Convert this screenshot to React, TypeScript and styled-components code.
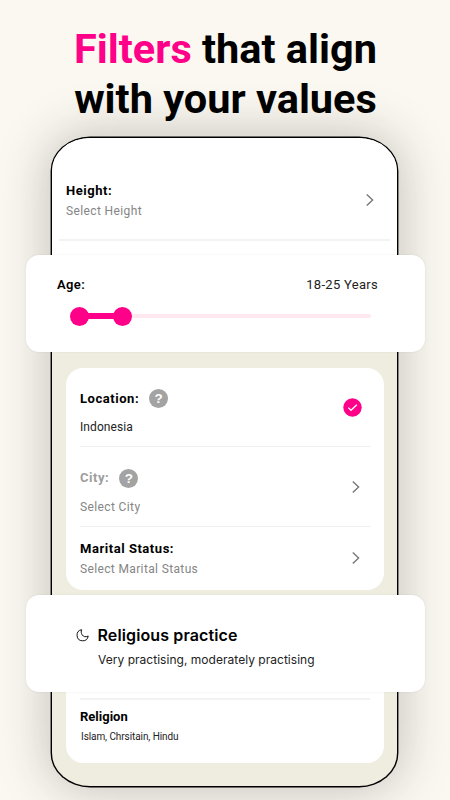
import React from "react";
import styled, { createGlobalStyle } from "styled-components";

const PINK = "#ff0089";

const GlobalStyle = createGlobalStyle`
  * { box-sizing: border-box; }
  body { margin: 0; background: #fbf8f1; }
`;

const Page = styled.main`
  width: 450px;
  height: 800px;
  overflow: hidden;
  background: #fbf8f1;
  font-family: Roboto, "Liberation Sans", sans-serif;
  color: #000;
`;

const Headline = styled.h1`
  position: relative;
  z-index: 1;
  margin: 0;
  height: 138px;
  padding: 24px 0 0 1px;
  text-align: center;
  font-size: 41.5px;
  line-height: 50px;
  font-weight: 700;
  white-space: nowrap;
`;

const Accent = styled.span`
  color: ${PINK};
`;

const Phone = styled.section`
  width: 345px;
  height: 648px;
  margin-left: 52px;
  border-radius: 38px / 33px;
  background: #efece0;
  box-shadow: 0 0 0 1.4px #000, 0 0 50px 4px rgba(40, 40, 40, 0.26);
`;

const TopPanel = styled.div`
  height: 118px;
  padding: 43px 7px 0;
  background: #fff;
  border-radius: 38px 38px 0 0 / 33px 33px 0 0;
`;

const Row = styled.div<{ $height: number; $left?: number; $right?: number }>`
  display: flex;
  align-items: center;
  justify-content: space-between;
  height: ${(p) => p.$height}px;
  padding: 0 ${(p) => p.$right ?? 0}px 0 ${(p) => p.$left ?? 0}px;
`;

const Gap = styled.div<{ $size: number }>`
  height: ${(p) => p.$size}px;
`;

const RowIcon = styled.span<{ $lift: number }>`
  display: flex;
  padding-bottom: ${(p) => p.$lift * 2}px;
`;

const TitleLine = styled.div<{ $height?: number }>`
  display: flex;
  align-items: center;
  gap: 10px;
  height: ${(p) => p.$height ?? 20}px;
`;

const Label = styled.span<{ $muted?: boolean; $spacing?: number; $weight?: number }>`
  font-size: 13px;
  line-height: 20px;
  font-weight: ${(p) => p.$weight ?? 700};
  letter-spacing: ${(p) => p.$spacing ?? 0.54}px;
  color: ${(p) => (p.$muted ? "#9d9d9d" : "#000")};
  white-space: nowrap;
`;

const Value = styled.div<{ $color?: string; $size?: number; $spacing?: number; $indent?: number }>`
  padding-left: ${(p) => p.$indent ?? 0}px;
  font-size: ${(p) => p.$size ?? 12}px;
  line-height: 20px;
  letter-spacing: ${(p) => p.$spacing ?? 0.38}px;
  color: ${(p) => p.$color ?? "#858585"};
  white-space: nowrap;
`;

const Divider = styled.hr<{ $thickness?: number }>`
  margin: 0;
  border: 0;
  height: ${(p) => p.$thickness ?? 1}px;
  background: ${(p) => (p.$thickness ? "#f3f3f3" : "#eeeeee")};
`;

const FloatingCard = styled.article`
  position: relative;
  width: 399px;
  height: 97px;
  margin-left: -26px;
  background: #fff;
  border-radius: 13px;
  box-shadow: 0 0 2px rgba(0, 0, 0, 0.1);
`;

const AgeCard = styled(FloatingCard)`
  margin-top: -1px;
  padding: 20px 47px 0 31px;
`;

const Slider = styled.div`
  display: flex;
  align-items: center;
  height: 20px;
  margin: 11px 7px 0 13px;
`;

const Thumb = styled.span`
  width: 19px;
  height: 19px;
  border-radius: 50%;
  background: ${PINK};
`;

const Range = styled.span`
  width: 26px;
  height: 6px;
  margin: 0 -1px;
  background: ${PINK};
`;

const Track = styled.span`
  flex: 1;
  height: 4px;
  border-radius: 0 2px 2px 0;
  background: #ffe8f0;
`;

const Panel = styled.div`
  height: 222px;
  margin: 16px 13px 0 14px;
  padding: 20px 14px 0;
  background: #fff;
  border-radius: 17px;
`;

const LowerPanel = styled.div`
  height: 71px;
  margin: 0 13px 0 14px;
  padding: 6px 14px 0;
  background: #fff;
  border-radius: 0 0 17px 17px;
`;

const PracticeCard = styled(FloatingCard)`
  display: grid;
  grid-template-columns: 13px 1fr;
  grid-template-rows: 24px 24px;
  column-gap: 8px;
  align-items: center;
  margin-top: 5px;
  padding: 28px 0 0 50px;
  font-family: Inter, "Liberation Sans", sans-serif;
`;

const PracticeTitle = styled.h2`
  margin: 0;
  padding: 0 0 1px 0.5px;
  font-size: 16px;
  font-weight: 600;
  letter-spacing: 0.12px;
  white-space: nowrap;
`;

const PracticeText = styled.div`
  grid-column: 2;
  padding: 1px 0 0 1px;
  font-size: 12px;
  letter-spacing: 0.03px;
  color: #222;
  white-space: nowrap;
`;

const HelpBadge = styled.span`
  display: flex;
  align-items: center;
  justify-content: center;
  width: 19px;
  height: 19px;
  border-radius: 50%;
  background: #a3a3a3;
  color: #fff;
  font-family: "Liberation Sans", sans-serif;
  font-size: 13.5px;
  font-weight: 700;
  line-height: 19px;
`;

const Chevron = () => (
  <svg width="8" height="14" viewBox="0 0 8 14" fill="none" stroke="#777" strokeWidth="1.4">
    <path d="M.8 1.5 6.6 7 .8 12.5" />
  </svg>
);

const Check = () => (
  <svg width="19" height="19" viewBox="0 0 19 19" fill="none">
    <circle cx="9.5" cy="9.5" r="9.2" fill={PINK} />
    <path d="m5.3 9.6 2.7 2.7 5.8-5.6" stroke="#fff" strokeWidth="1.3" />
  </svg>
);

const Moon = () => (
  <svg width="13" height="13" viewBox="0 0 13 13" fill="none" stroke="#111" strokeWidth="1" strokeLinejoin="round">
    <path d="M5.6 .7A5.6 5.6 0 1 0 12.2 7C9.7 8.3 7.5 7.8 6.2 5.9 5.1 4.2 5 2.4 5.6.7Z" />
  </svg>
);

export default function App() {
  return (
    <>
      <GlobalStyle />
      <Page>
        <Headline>
          <Accent>Filters</Accent> that align
          <br />
          with your values
        </Headline>
        <Phone>
          <TopPanel>
            <Row $height={40} $left={7} $right={16}>
              <div>
                <TitleLine>
                  <Label>Height:</Label>
                </TitleLine>
                <Value>Select Height</Value>
              </div>
              <RowIcon $lift={1}>
                <Chevron />
              </RowIcon>
            </Row>
            <Gap $size={18} />
            <Divider $thickness={2} />
          </TopPanel>

          <AgeCard>
            <Row $height={20}>
              <Label $weight={600} $spacing={0.4}>Age:</Label>
              <Value $color="#222" $size={13} $spacing={0.3}>18-25 Years</Value>
            </Row>
            <Slider>
              <Thumb />
              <Range />
              <Thumb />
              <Track />
            </Slider>
          </AgeCard>

          <Panel>
            <Row $height={58} $right={8}>
              <div>
                <TitleLine $height={21}>
                  <Label>Location:</Label>
                  <HelpBadge>?</HelpBadge>
                </TitleLine>
                <Gap $size={8} />
                <Value $color="#222" $spacing={0.08}>Indonesia</Value>
                <Gap $size={9} />
              </div>
              <RowIcon $lift={10}>
                <Check />
              </RowIcon>
            </Row>
            <Divider />
            <Row $height={79} $right={10}>
              <div>
                <Gap $size={11} />
                <TitleLine $height={21}>
                  <Label $muted>City:</Label>
                  <HelpBadge>?</HelpBadge>
                </TitleLine>
                <Gap $size={8} />
                <Value>Select City</Value>
              </div>
              <Chevron />
            </Row>
            <Divider />
            <Row $height={64} $right={10}>
              <div>
                <TitleLine>
                  <Label>Marital Status:</Label>
                </TitleLine>
                <Value $spacing={0.36}>Select Marital Status</Value>
              </div>
              <RowIcon $lift={1}>
                <Chevron />
              </RowIcon>
            </Row>
          </Panel>

          <PracticeCard>
            <Moon />
            <PracticeTitle>Religious practice</PracticeTitle>
            <PracticeText>Very practising, moderately practising</PracticeText>
          </PracticeCard>

          <LowerPanel>
            <Divider $thickness={2} />
            <Gap $size={7} />
            <TitleLine>
              <Label $spacing={0}>Religion</Label>
            </TitleLine>
            <Value $color="#222" $size={10} $spacing={-0.08} $indent={1}>
              Islam, Chrsitain, Hindu
            </Value>
          </LowerPanel>
        </Phone>
      </Page>
    </>
  );
}
